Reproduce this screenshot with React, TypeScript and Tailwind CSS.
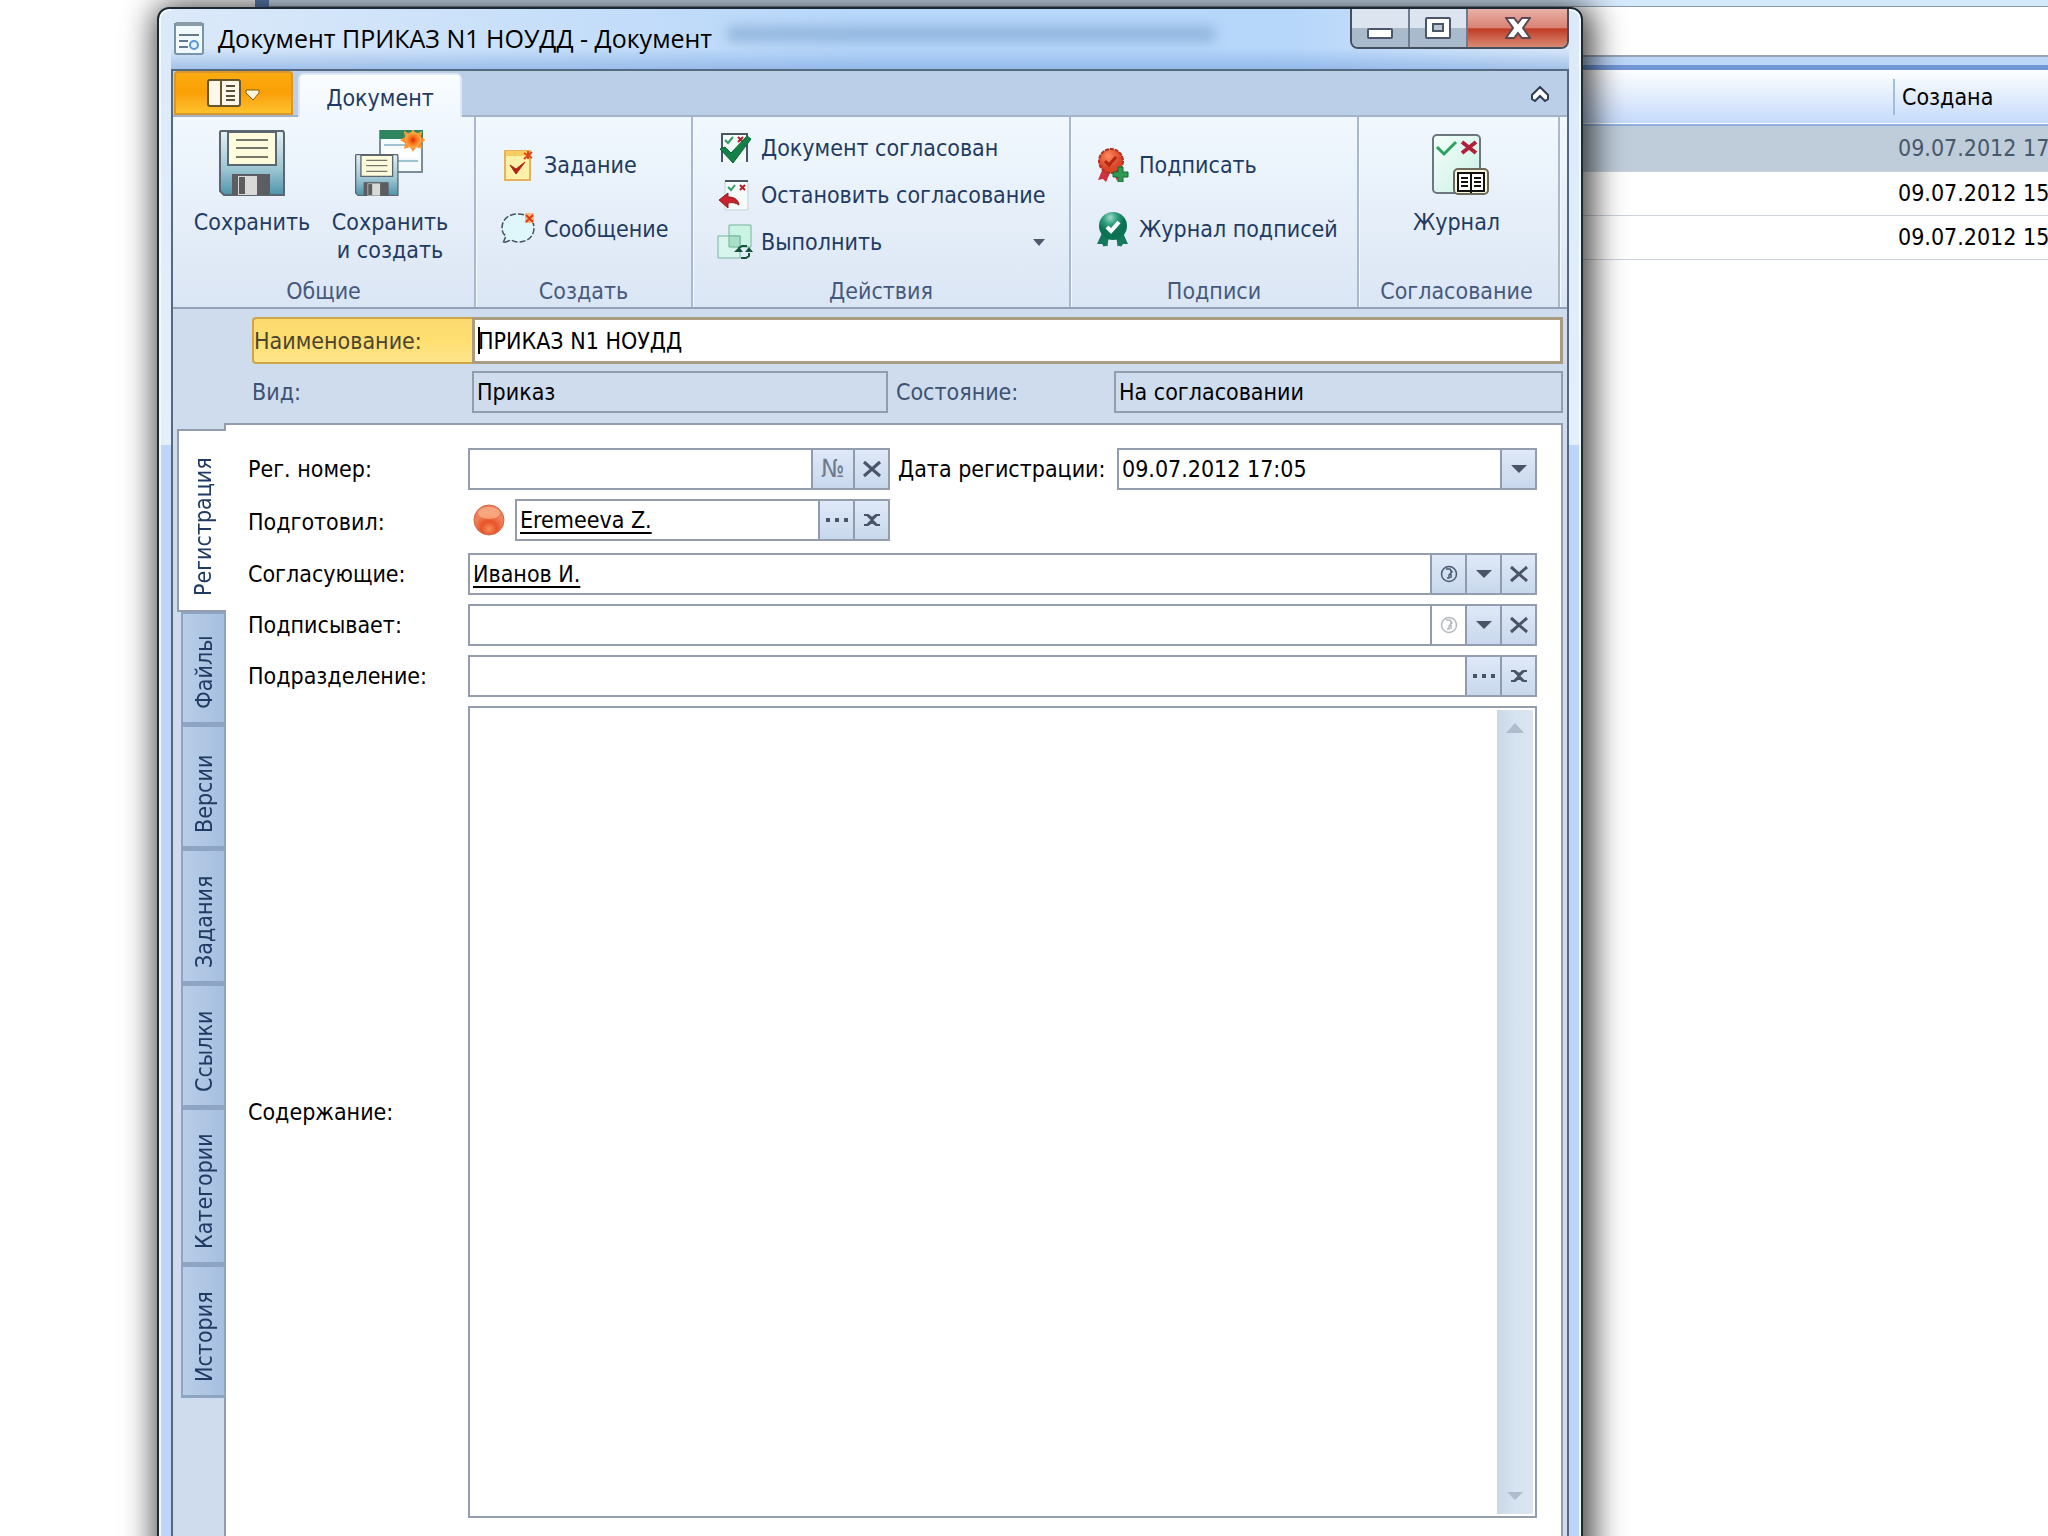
import * as React from "react";
import clsx from "clsx";

const dataTabs = [
  { title: "Файлы", size: "h-[113px]" },
  { title: "Версии", size: "h-[124px]" },
  { title: "Задания", size: "h-[135px]" },
  { title: "Ссылки", size: "h-[124px]" },
  { title: "Категории", size: "h-[157px]" },
  { title: "История", size: "h-[133px]" },
];

const dataRows = [
  { created: "09.07.2012 17", selected: true },
  { created: "09.07.2012 15", selected: false },
  { created: "09.07.2012 15", selected: false },
];

/* ---------- icons ---------- */

function FloppyShape() {
  return (
    <>
      <path d="M2 1h62l1 2v62H5l-4-4V2z" fill="url(#floppy)" stroke="#5c6670" strokeWidth="2" />
      <path d="M9 2h48v33H9z" fill="#fdfbdc" stroke="#5c6670" strokeWidth="2" />
      <path d="M17 10h32M17 18h32M17 27h32" stroke="#77776c" strokeWidth="2" />
      <path d="M13 44h38v21H13z" fill="#5b5d60" />
      <path d="M19 46h19v19H19z" fill="#d9d9d7" />
      <path d="M20 47h6v17h-6z" fill="#5b5d60" />
    </>
  );
}

function IconDefs() {
  return (
    <svg width="0" height="0" className="absolute" aria-hidden="true">
      <defs>
        <linearGradient id="floppy" x1="0" y1="0" x2="0" y2="1">
          <stop offset="0" stopColor="#e4f1f4" />
          <stop offset="0.6" stopColor="#9cc5d2" />
          <stop offset="1" stopColor="#4d93ab" />
        </linearGradient>
        <radialGradient id="flash">
          <stop offset="0" stopColor="#e02a08" />
          <stop offset="0.5" stopColor="#f9761c" />
          <stop offset="1" stopColor="#fdb04a" />
        </radialGradient>
        <radialGradient id="sealRed" cx="0.4" cy="0.3">
          <stop offset="0" stopColor="#ff8a5c" />
          <stop offset="1" stopColor="#d9462a" />
        </radialGradient>
        <radialGradient id="ball" cx="0.5" cy="0.8">
          <stop offset="0" stopColor="#f9905c" />
          <stop offset="0.5" stopColor="#e9532a" />
          <stop offset="1" stopColor="#ee8158" />
        </radialGradient>
        <radialGradient id="sealGreen" cx="0.4" cy="0.2">
          <stop offset="0" stopColor="#9fdcc8" />
          <stop offset="0.5" stopColor="#2f9f7f" />
          <stop offset="1" stopColor="#0b7254" />
        </radialGradient>
        <linearGradient id="mint" x1="0" y1="0" x2="1" y2="1">
          <stop offset="0" stopColor="#f4fffa" />
          <stop offset="1" stopColor="#c9efe4" />
        </linearGradient>
      </defs>
    </svg>
  );
}

function SaveIcon() {
  return (
    <svg width="66" height="66" viewBox="0 0 66 66">
      <FloppyShape />
    </svg>
  );
}

function SaveNewIcon() {
  return (
    <svg width="70" height="66" viewBox="0 0 70 66">
      <path d="M25 1h42v41H25z" fill="#f5fafc" stroke="#7c8c98" strokeWidth="2" />
      <path d="M25 0h43v9H25z" fill="#2f8560" />
      <path d="M29 15h34M29 31h34" stroke="#9fc3d4" strokeWidth="2" />
      <path d="M29 19h34v9H29z" fill="#fff" />
      <g transform="translate(0 24) scale(0.66 0.64)">
        <FloppyShape />
      </g>
      <path
        d="M58 -1l3 5 6-3-1 6 5 3-5 3 1 6-6-2-3 5-3-5-6 2 1-6-5-3 5-3-1-6 6 3z"
        fill="url(#flash)"
      />
      <circle cx="58" cy="10" r="8" fill="url(#flash)" />
    </svg>
  );
}

function TaskIcon() {
  return (
    <svg width="34" height="34" viewBox="0 0 34 34">
      <path d="M4 3h25v29H4z" fill="#fdf0a8" stroke="#e3b25e" strokeWidth="2" />
      <path d="M5 3h23v5H5z" fill="#f6cd62" />
      <path d="M9 17l6 9 9-12-9 7z" fill="#b32216" stroke="#b32216" />
      <path d="M27 3v8M23 5l8 5M31 4l-8 7" stroke="#e2431c" strokeWidth="2" />
    </svg>
  );
}

function MessageIcon() {
  return (
    <svg width="36" height="36" viewBox="0 0 36 36">
      <path
        d="M18 3c9 0 16 5 16 14s-7 14-16 14c-3 0-5-1-7-2l-8 3 3-7c-3-2-4-5-4-8C2 8 9 3 18 3z"
        fill="#dff6fa"
        stroke="#41535e"
        strokeWidth="1.5"
        strokeDasharray="6 2"
      />
      <path d="M25 2h9v10h-9z" fill="#f9b878" />
      <path d="M26 4l7 7M33 4l-7 7" stroke="#dd3b14" strokeWidth="2" />
    </svg>
  );
}

function ApprovedIcon() {
  return (
    <svg width="34" height="34" viewBox="0 0 34 34">
      <path d="M4 3h25v28H4z" fill="#f3fbf8" />
      <path d="M4 31V3h25v28" fill="none" stroke="#4b5663" strokeWidth="2" />
      <path d="M7 9l3 3 5-6" stroke="#2f9b63" strokeWidth="2" fill="none" />
      <path d="M20 6l5 5M25 6l-5 5" stroke="#b01e2a" strokeWidth="2" />
      <path d="M2 18l5-2 6 6L29 5l4 3-18 24z" fill="#158048" stroke="#0c6537" />
    </svg>
  );
}

function StopIcon() {
  return (
    <svg width="34" height="34" viewBox="0 0 34 34">
      <path d="M7 3h23v29H7z" fill="#f4fbfa" stroke="#c3d0d8" />
      <path d="M7 3h23" stroke="#4b5663" strokeWidth="2" />
      <path d="M10 9l3 3 4-5" stroke="#2f9b63" strokeWidth="2" fill="none" />
      <path d="M22 7l5 5M27 7l-5 5" stroke="#b01e2a" strokeWidth="2" />
      <path d="M1 22l9-7v4c6 0 10 2 11 8-3-2-6-3-11-2v5z" fill="#c9242b" stroke="#8f1a20" />
    </svg>
  );
}

function ExecuteIcon() {
  return (
    <svg width="36" height="36" viewBox="0 0 36 36">
      <path d="M12 1h22v22H12z" fill="#c9f3e2" stroke="#79b39d" />
      <path d="M1 12h22v22H1z" fill="#d6f7ea" fillOpacity="0.8" stroke="#79b39d" />
      <path d="M12 12h11v11H12z" fill="#a8dfc6" stroke="#79b39d" />
      <path d="M22 26v-2l3-2h5M32 29v3l-3 2h-5" stroke="#14523a" strokeWidth="2" fill="none" />
      <path d="M17 28h9l-4-5zM28 28h8l-4-5z" fill="#14523a" />
    </svg>
  );
}

function SignIcon() {
  return (
    <svg width="34" height="34" viewBox="0 0 34 34">
      <path d="M7 20L2 32l5-1 3 3 4-9zM16 22l5 11 2-6z" fill="#cf3340" />
      <circle cx="15" cy="13" r="12" fill="url(#sealRed)" stroke="#b2311d" strokeWidth="2" strokeDasharray="4 1" />
      <path d="M9 13l4 4 7-8" stroke="#b12712" strokeWidth="3" fill="none" />
      <path d="M22 19h5v5h5v5h-5v5h-5v-5h-5v-5h5z" fill="#2f9a52" stroke="#176b35" />
    </svg>
  );
}

function SealIcon() {
  return (
    <svg width="34" height="36" viewBox="0 0 34 36">
      <path d="M6 22L1 33h5l2 3 6-10zM27 22l5 11h-5l-2 3-6-10z" fill="#16795b" />
      <path d="M11 27l-1 8M22 27l1 8" stroke="#16795b" strokeWidth="3" />
      <circle cx="17" cy="15" r="14" fill="url(#sealGreen)" />
      <path d="M11 16l4 4 8-9" stroke="#fff" strokeWidth="4" fill="none" />
    </svg>
  );
}

function JournalIcon() {
  return (
    <svg width="66" height="66" viewBox="0 0 66 66">
      <rect x="9" y="5" width="47" height="58" rx="4" fill="url(#mint)" stroke="#6c7880" strokeWidth="2" />
      <path d="M13 17l7 7 12-12" stroke="#2aa361" strokeWidth="3" fill="none" />
      <path d="M38 12l14 11M52 12L38 23" stroke="#b0203a" strokeWidth="4" />
      <rect x="30" y="39" width="34" height="25" rx="4" fill="#fbf7dd" stroke="#6b6a5c" strokeWidth="2" />
      <path d="M34 43h26v18H34z" fill="#fff" stroke="#111" strokeWidth="2" />
      <path d="M47 43v20M37 48h7M37 52h7M37 56h7M50 48h7M50 52h7M50 56h7" stroke="#111" strokeWidth="2" />
    </svg>
  );
}

function WindowIcon() {
  return (
    <svg width="30" height="34" viewBox="0 0 30 34">
      <path d="M1 3h28v28c0 1-1 2-2 2H3c-1 0-2-1-2-2z" fill="#f2f9fb" stroke="#7795a4" strokeWidth="2" />
      <path d="M2 1h26v4H2z" fill="#8a9ca6" />
      <path d="M5 14h20M5 20h9M5 26h9" stroke="#65798a" strokeWidth="2" />
      <circle cx="20" cy="24" r="4" fill="#e3f1ff" stroke="#5796d8" strokeWidth="2" />
    </svg>
  );
}

function AppMenuIcon() {
  return (
    <svg width="54" height="28" viewBox="0 0 54 28">
      <rect x="1" y="1" width="32" height="26" rx="2" fill="#fdf8ea" stroke="#67552c" strokeWidth="2" />
      <path d="M14 1v26" stroke="#67552c" strokeWidth="2" />
      <path d="M19 7h9M19 12h9M19 17h9M19 21h9" stroke="#5b5038" strokeWidth="2" />
      <path d="M39 11h13v3l-6 7-7-7z" fill="#fff6d8" stroke="#7d5a10" />
    </svg>
  );
}

function CrossIcon({ bold = false }: { bold?: boolean }) {
  return bold ? (
    <svg width="18" height="14" viewBox="0 0 18 14">
      <path d="M1 2h4l4 3 4-3h4M1 12h4l4-3 4 3h4M4 2l10 10M14 2L4 12" stroke="#4a5468" strokeWidth="2" fill="none" />
    </svg>
  ) : (
    <svg width="18" height="18" viewBox="0 0 18 18">
      <path d="M1 2l16 14M17 2L1 16" stroke="#4a5468" strokeWidth="3" />
    </svg>
  );
}

function DotsIcon() {
  return (
    <svg width="22" height="6" viewBox="0 0 22 6">
      <path d="M0 1h4v4H0zM9 1h4v4H9zM18 1h4v4h-4z" fill="#4a5468" />
    </svg>
  );
}

function ArrowIcon({ color = "#4a5468", up = false }: { color?: string; up?: boolean }) {
  return (
    <svg width="18" height="10" viewBox="0 0 18 10">
      <path d={up ? "M0 10L9 0l9 10z" : "M1 1h16L9 9z"} fill={color} />
    </svg>
  );
}

function ClockIcon({ muted = false }: { muted?: boolean }) {
  const color = muted ? "#b4b8bf" : "#4a5a72";
  return (
    <svg width="18" height="18" viewBox="0 0 18 18">
      <circle cx="9" cy="9" r="7.5" fill="none" stroke={color} strokeWidth="1.5" />
      <path d="M6 4h4l2 3-3 3v3H7M11 6v7" stroke={color} strokeWidth="1.5" fill="none" />
    </svg>
  );
}

/* ---------- parts ---------- */

interface ButtonProps {
  label: string;
  className?: string;
  children: React.ReactNode;
}

function FieldButton({ label, className = "w-[35px]", children }: ButtonProps) {
  return (
    <button
      type="button"
      aria-label={label}
      className={clsx(
        "flex shrink-0 items-center justify-center border-l-2 border-[#8f9bb0] bg-linear-to-b from-[#dfe9f8] to-[#c8d8ec]",
        className
      )}
    >
      {children}
    </button>
  );
}

interface FieldProps {
  id: string;
  value?: string;
  className?: string;
  inputClass?: string;
  children?: React.ReactNode;
}

function Field({ id, value = "", className, inputClass, children }: FieldProps) {
  return (
    <div className={clsx("flex h-[42px] min-w-0 border-2 border-[#949dae]", className)}>
      <input
        id={id}
        defaultValue={value}
        className={clsx("min-w-0 flex-1 bg-transparent px-[3px] text-black outline-none", inputClass)}
      />
      {children}
    </div>
  );
}

function FormLabel({ htmlFor, children }: { htmlFor: string; children: React.ReactNode }) {
  return (
    <label htmlFor={htmlFor} className="w-[220px] shrink-0 text-black">
      {children}
    </label>
  );
}

function RibbonGroup({ title, className, children }: { title: string; className: string; children: React.ReactNode }) {
  return (
    <section
      className={clsx(
        "flex shrink-0 flex-col border-r-2 border-[#a9b8cd] text-[#1f3b63] shadow-[1px_0_0_#f6faff]",
        className
      )}
    >
      <div className="flex flex-1">{children}</div>
      <h2 className="pb-[2px] text-center leading-7 text-[#46597d]">{title}</h2>
    </section>
  );
}

function BigButton({ label, children }: { label: string; children: React.ReactNode }) {
  return (
    <button type="button" className="flex w-[138px] flex-col items-center pt-[13px]">
      {children}
      <span className="mt-3 w-[126px] text-center leading-7">{label}</span>
    </button>
  );
}

function SmallButton({ label, children }: { label: string; children: React.ReactNode }) {
  return (
    <button type="button" className="flex h-9 items-center gap-2 text-left whitespace-nowrap">
      <span className="flex w-9 justify-center">{children}</span>
      {label}
    </button>
  );
}

/* ---------- main application window ---------- */

function DocumentList() {
  return (
    <div className="ml-[255px] border-l-[14px] border-[#5f84bd] bg-white">
      <div className="h-[7px] border-b border-[#8e9aa6] bg-[#d5e9fc]" />
      <div className="h-[50px] border-b-2 border-[#98a3b3]" />
      <div className="h-[13px] border-b-[5px] border-[#7196d4] bg-[#bcd6f8]" />
      <table className="w-full table-fixed border-collapse text-black">
        <thead>
          <tr className="h-[55px] border-b-2 border-[#8fb0de] bg-linear-to-b from-white to-[#c5dafa]">
            <th aria-label="Документ" />
            <th className="w-[155px] text-left font-normal">
              <div className="border-l-2 border-[#9dbfe2] py-1 pl-[7px] leading-7">Создана</div>
            </th>
          </tr>
        </thead>
        <tbody>
          {dataRows.map((row, index) => (
            <tr
              key={index}
              className={clsx(
                row.selected ? "h-[46px] bg-[#bfccd9] text-[#46586b]" : "h-[44px]",
                "border-b border-[#ccd3db] leading-7"
              )}
            >
              <td />
              <td className="pl-[5px] whitespace-nowrap">{row.created}</td>
            </tr>
          ))}
        </tbody>
      </table>
    </div>
  );
}

/* ---------- document card ---------- */

function TitleBar() {
  return (
    <header className="flex h-[60px] items-start bg-[linear-gradient(to_bottom,transparent_65%,rgba(125,168,224,0.6)),linear-gradient(to_right,#dbe9f9,#b6d6fa_50%,#b6d6fa_80%,#dbe9f9)]">
      <div className="flex flex-1 items-center gap-[14px] pt-[11px] pl-[3px]">
        <WindowIcon />
        <h1 className="font-['Open_Sans','Noto_Sans',sans-serif] text-[25px] leading-9 text-black">
          Документ ПРИКАЗ N1 НОУДД - Документ
        </h1>
        <div className="mb-2 h-4 w-[490px] rounded-full bg-[#6f97c4]/50 blur-[6px]" />
      </div>
      <div className="flex h-[40px] overflow-hidden rounded-b-lg border-2 border-t-0 border-[#454f5e]">
        <button
          type="button"
          aria-label="Свернуть"
          className="flex w-[58px] items-end justify-center border-r-2 border-[#6d7c90] bg-linear-to-b from-[#dbe4ef] from-50% to-[#a9bacd] to-50% pb-2"
        >
          <svg width="26" height="11" viewBox="0 0 26 11">
            <rect x="1" y="1" width="24" height="9" rx="1" fill="#fff" stroke="#4b5668" strokeWidth="2" />
          </svg>
        </button>
        <button
          type="button"
          aria-label="Развернуть"
          className="flex w-[58px] items-center justify-center border-r-2 border-[#6d7c90] bg-linear-to-b from-[#dbe4ef] from-50% to-[#a9bacd] to-50%"
        >
          <svg width="26" height="22" viewBox="0 0 26 22">
            <rect x="1" y="1" width="24" height="20" rx="1" fill="#fff" stroke="#4b5668" strokeWidth="2" />
            <rect x="8" y="7" width="10" height="7" fill="#b9c6d6" stroke="#4b5668" strokeWidth="2" />
          </svg>
        </button>
        <button
          type="button"
          aria-label="Закрыть"
          className="flex w-[99px] items-center justify-center bg-[linear-gradient(to_bottom,#e8b0a6,#d98273_50%,#c03a24_52%,#d98a74)]"
        >
          <svg width="26" height="22" viewBox="0 0 26 22">
            <path
              d="M1 1h8l4 5 4-5h8l-7 10 7 10h-8l-4-5-4 5H1l7-10z"
              fill="#fff"
              stroke="#5b4a55"
              strokeWidth="2"
            />
          </svg>
        </button>
      </div>
    </header>
  );
}

function Ribbon() {
  return (
    <>
      <nav className="flex h-[46px] items-stretch bg-[#bccfe8] shadow-[inset_0_-2px_0_#a3b3ca]">
        <button
          type="button"
          aria-label="Меню"
          className="mb-[2px] ml-px flex w-[119px] items-center justify-center rounded-t border-2 border-[#d9962a] bg-linear-to-b from-[#fbab10] via-[#fb9f06] to-[#fcc22c]"
        >
          <AppMenuIcon />
        </button>
        <button
          type="button"
          className="mt-[2px] ml-[5px] w-[164px] rounded-t-md border-2 border-b-0 border-[#dfe9f6] bg-linear-to-b from-[#fbfdff] to-[#f0f7fe] pt-[3px] text-[#1f3b63]"
        >
          Документ
        </button>
        <button type="button" aria-label="Свернуть ленту" className="mr-[17px] ml-auto">
          <svg width="20" height="16" viewBox="0 0 20 16">
            <path d="M10 1l8 8v4l-3 2-5-5-5 5-3-2V9z" fill="#fff" stroke="#303e55" strokeWidth="2" />
          </svg>
        </button>
      </nav>
      <div className="flex h-[192px] border-b-2 border-[#93a2b9] bg-linear-to-b from-[#f1f8fe] via-[#e6eff9] to-[#dbe6f5]">
        <RibbonGroup title="Общие" className="w-[303px]">
          <div className="flex flex-1 pl-[10px]">
            <BigButton label="Сохранить">
              <SaveIcon />
            </BigButton>
            <BigButton label="Сохранить и создать">
              <SaveNewIcon />
            </BigButton>
          </div>
        </RibbonGroup>
        <RibbonGroup title="Создать" className="w-[217px]">
          <div className="flex flex-col gap-7 pt-[30px] pl-6">
            <SmallButton label="Задание">
              <TaskIcon />
            </SmallButton>
            <SmallButton label="Сообщение">
              <MessageIcon />
            </SmallButton>
          </div>
        </RibbonGroup>
        <RibbonGroup title="Действия" className="w-[378px]">
          <div className="flex flex-1 flex-col gap-[11px] pt-[13px] pr-[29px] pl-6">
            <SmallButton label="Документ согласован">
              <ApprovedIcon />
            </SmallButton>
            <SmallButton label="Остановить согласование">
              <StopIcon />
            </SmallButton>
            <div className="flex items-center justify-between">
              <SmallButton label="Выполнить">
                <ExecuteIcon />
              </SmallButton>
              <button type="button" aria-label="Ещё">
                <svg width="12" height="8" viewBox="0 0 12 8">
                  <path d="M0 1h12L6 8z" fill="#4d5a6e" />
                </svg>
              </button>
            </div>
          </div>
        </RibbonGroup>
        <RibbonGroup title="Подписи" className="w-[288px]">
          <div className="flex flex-col gap-7 pt-[30px] pl-6">
            <SmallButton label="Подписать">
              <SignIcon />
            </SmallButton>
            <SmallButton label="Журнал подписей">
              <SealIcon />
            </SmallButton>
          </div>
        </RibbonGroup>
        <RibbonGroup title="Согласование" className="w-[201px] pr-1">
          <div className="flex flex-1 justify-center">
            <BigButton label="Журнал">
              <JournalIcon />
            </BigButton>
          </div>
        </RibbonGroup>
      </div>
    </>
  );
}

function CardHead() {
  return (
    <div className="flex flex-col gap-[7px] pt-2 pr-1 pb-[10px] pl-[79px]">
      <div className="flex h-[47px]">
        <label
          htmlFor="name"
          className="flex w-[220px] shrink-0 items-center rounded-l border-2 border-r-0 border-[#cfa646] bg-linear-to-b from-[#fbd971] via-[#ffdf70] to-[#fde58c] text-[#4b4530]"
        >
          Наименование:
        </label>
        <div className="relative flex flex-1 border-[3px] border-[#aa9c80] bg-white">
          <input
            id="name"
            defaultValue="ПРИКАЗ N1 НОУДД"
            className="min-w-0 flex-1 bg-transparent px-[3px] text-black outline-none"
          />
          <span className="absolute top-[7px] left-[3px] h-[27px] w-[2px] bg-black" />
        </div>
      </div>
      <div className="flex items-center text-[#3d5272]">
        <label htmlFor="kind" className="w-[220px] shrink-0">
          Вид:
        </label>
        <Field id="kind" value="Приказ" className="w-[416px]" />
        <label htmlFor="state" className="w-[226px] shrink-0 pl-2">
          Состояние:
        </label>
        <Field id="state" value="На согласовании" className="flex-1" />
      </div>
    </div>
  );
}

function SideTabs() {
  return (
    <div role="tablist" className="-mr-[2px] flex w-[53px] shrink-0 flex-col items-end pt-[6px] text-[#1f3b63]">
      <button
        type="button"
        role="tab"
        aria-selected="true"
        className="relative flex h-[183px] w-[49px] rotate-180 items-center justify-start border-2 border-l-0 border-[#949dae] bg-white pt-[14px] [writing-mode:vertical-rl]"
      >
        Регистрация
      </button>
      {dataTabs.map((item) => (
        <button
          type="button"
          role="tab"
          aria-selected="false"
          key={item.title}
          className={clsx(
            "flex w-[45px] rotate-180 items-center justify-start border-2 border-t-3 border-[#8ea4c3] bg-linear-to-l from-[#b9cde8] to-[#a6bfe0] pt-[13px] [writing-mode:vertical-rl]",
            item.size
          )}
        >
          {item.title}
        </button>
      ))}
    </div>
  );
}

function RegistrationPanel() {
  return (
    <div className="mr-1 flex min-w-0 flex-1 flex-col gap-[9px] border-2 border-b-0 border-[#949dae] bg-white pt-[23px] pr-6 pb-5 pl-[22px]">
      <div className="flex items-center">
        <FormLabel htmlFor="number">Рег. номер:</FormLabel>
        <Field id="number" className="w-[422px]">
          <FieldButton label="Присвоить номер" className="w-[42px] text-[25px] text-[#6f7a8c]">
            №
          </FieldButton>
          <FieldButton label="Очистить номер">
            <CrossIcon />
          </FieldButton>
        </Field>
        <label htmlFor="date" className="w-[227px] shrink-0 pl-2 whitespace-nowrap text-black">
          Дата регистрации:
        </label>
        <Field id="date" value="09.07.2012 17:05" className="flex-1">
          <FieldButton label="Выбрать дату">
            <ArrowIcon />
          </FieldButton>
        </Field>
      </div>
      <div className="flex h-[45px] items-start">
        <label htmlFor="author" className="w-[220px] shrink-0 self-center text-black">
          Подготовил:
        </label>
        <svg className="mt-[5px] mr-[10px] ml-[5px] shrink-0" width="32" height="32" viewBox="0 0 32 32">
          <circle cx="16" cy="16" r="15" fill="url(#ball)" stroke="#c9694b" />
          <ellipse cx="16" cy="9" rx="11" ry="6" fill="#ffc09a" fillOpacity="0.6" />
        </svg>
        <Field
          id="author"
          value="Eremeeva Z."
          className="w-[375px]"
          inputClass="underline decoration-2 underline-offset-4"
        >
          <FieldButton label="Выбрать сотрудника">
            <DotsIcon />
          </FieldButton>
          <FieldButton label="Очистить сотрудника">
            <CrossIcon bold />
          </FieldButton>
        </Field>
      </div>
      <div className="flex items-center">
        <FormLabel htmlFor="approvers">Согласующие:</FormLabel>
        <Field
          id="approvers"
          value="Иванов И."
          className="flex-1"
          inputClass="underline decoration-2 underline-offset-4"
        >
          <FieldButton label="История согласующих">
            <ClockIcon />
          </FieldButton>
          <FieldButton label="Выбрать согласующих">
            <ArrowIcon />
          </FieldButton>
          <FieldButton label="Очистить согласующих">
            <CrossIcon />
          </FieldButton>
        </Field>
      </div>
      <div className="flex items-center">
        <FormLabel htmlFor="signer">Подписывает:</FormLabel>
        <Field id="signer" className="flex-1">
          <FieldButton label="История подписывающих" className="w-[35px] bg-white bg-none">
            <ClockIcon muted />
          </FieldButton>
          <FieldButton label="Выбрать подписывающего">
            <ArrowIcon />
          </FieldButton>
          <FieldButton label="Очистить подписывающего">
            <CrossIcon />
          </FieldButton>
        </Field>
      </div>
      <div className="flex items-center">
        <FormLabel htmlFor="department">Подразделение:</FormLabel>
        <Field id="department" className="flex-1">
          <FieldButton label="Выбрать подразделение">
            <DotsIcon />
          </FieldButton>
          <FieldButton label="Очистить подразделение">
            <CrossIcon bold />
          </FieldButton>
        </Field>
      </div>
      <div className="flex min-h-0 flex-1 items-center">
        <FormLabel htmlFor="content">Содержание:</FormLabel>
        <div className="flex flex-1 self-stretch border-2 border-[#949dae] p-[2px]">
          <textarea id="content" className="min-w-0 flex-1 resize-none p-1 text-black outline-none" />
          <div className="flex w-9 flex-col items-center justify-between bg-linear-to-r from-[#c8d7e7] via-[#d6e3f1] to-[#dde4f0] py-[13px]">
            <button type="button" aria-label="Прокрутить вверх">
              <ArrowIcon color="#b0bccc" up />
            </button>
            <button type="button" aria-label="Прокрутить вниз">
              <ArrowIcon color="#b0bccc" />
            </button>
          </div>
        </div>
      </div>
    </div>
  );
}

export default function App() {
  return (
    <main className="relative h-screen overflow-hidden bg-white font-['DejaVu_Sans_Condensed','Noto_Sans',sans-serif] text-[23px] leading-8">
      <IconDefs />
      <DocumentList />
      <div className="absolute top-[7px] right-[465px] -bottom-8 left-[157px] flex flex-col rounded-t-xl border-2 border-[#1c2833] bg-[linear-gradient(to_bottom,#dbe9f9,#e4effc_28%,#bcd5f8_28%)] px-[12px] pb-7 shadow-[4px_4px_32px_6px_rgba(0,0,0,0.75),inset_0_0_0_2px_#f2f9ff]">
        <TitleBar />
        <div className="flex min-h-0 flex-1 flex-col border-2 border-b-0 border-[#55697f] bg-[#cfdcee]">
          <Ribbon />
          <CardHead />
          <div className="flex min-h-0 flex-1">
            <SideTabs />
            <RegistrationPanel />
          </div>
        </div>
      </div>
    </main>
  );
}
